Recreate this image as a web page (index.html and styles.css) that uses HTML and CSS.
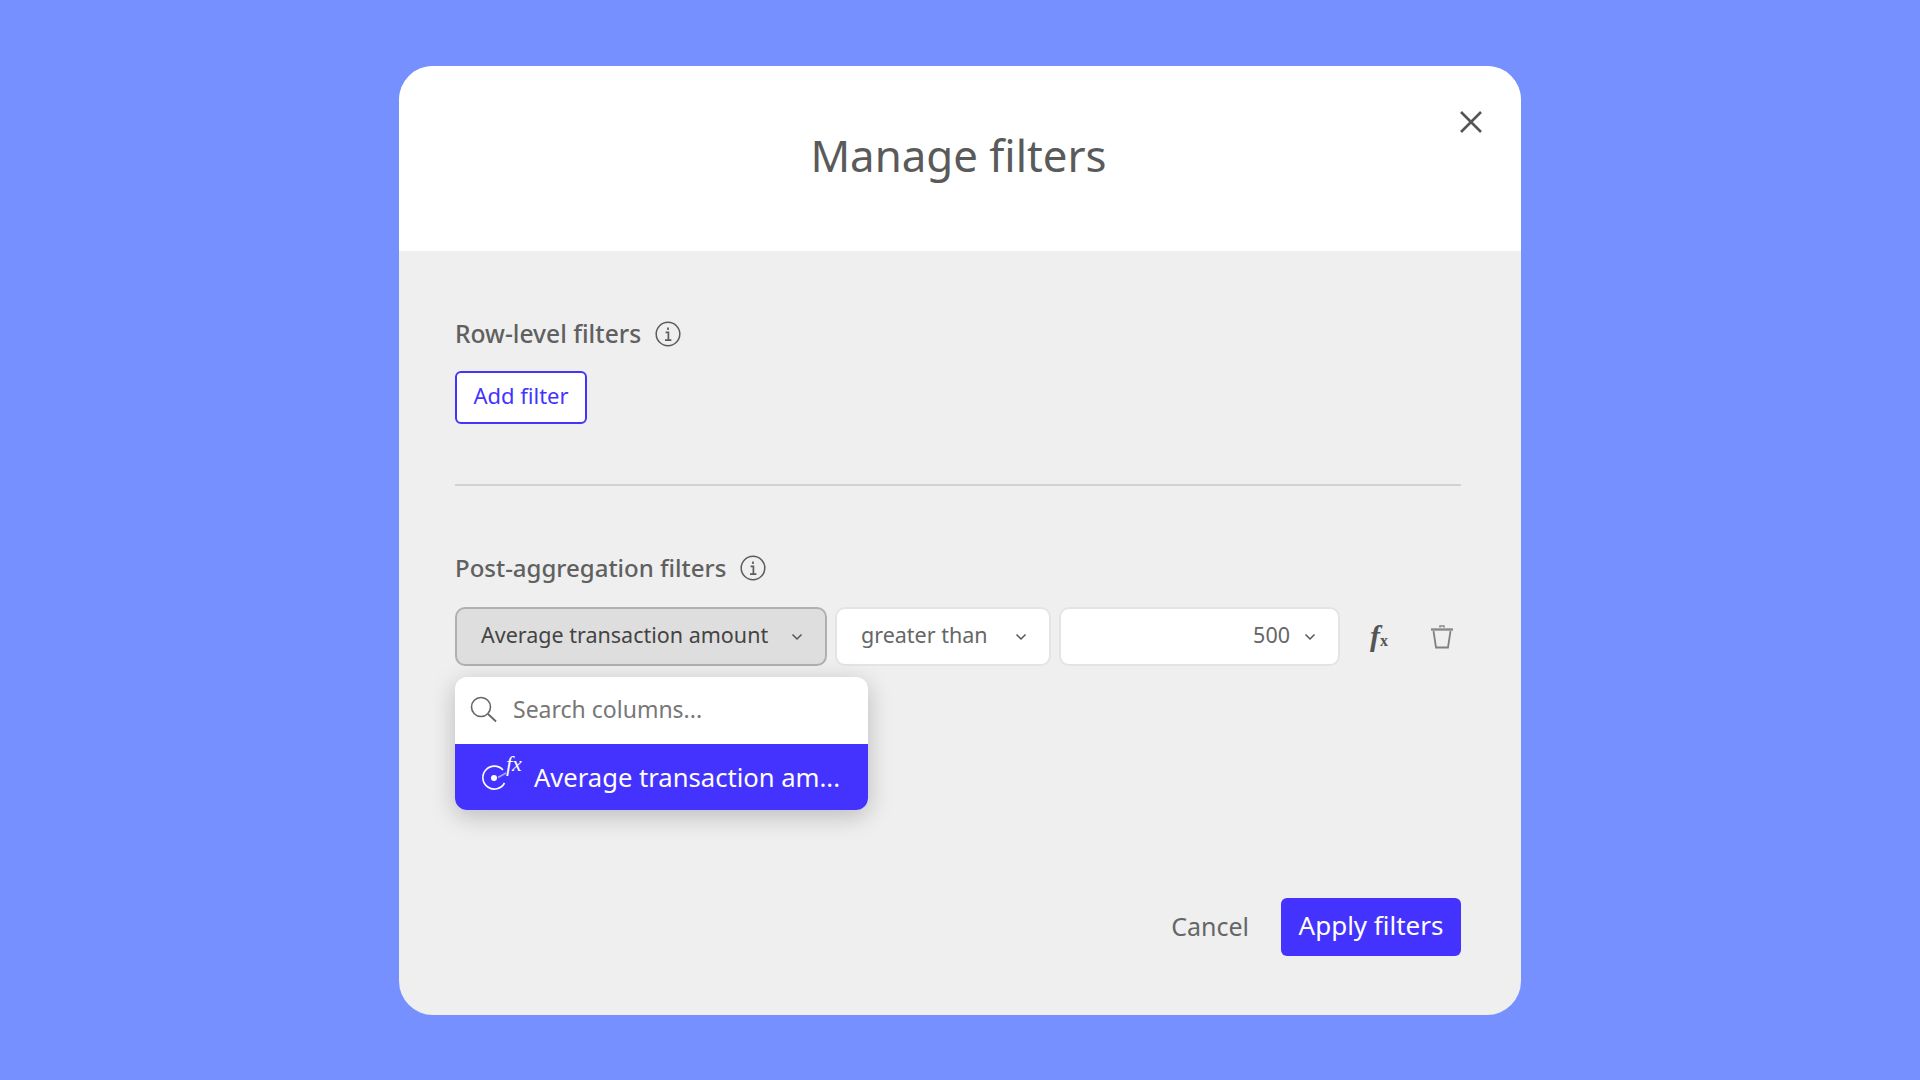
FILE: index.html
```html
<!DOCTYPE html>
<html lang="en">
<head>
    <meta charset="UTF-8">
    <title>Manage filters</title>
    <link rel="stylesheet" href="styles.css">
</head>
<body>
    <div class="modal">
        <!-- Header -->
        <div class="modal-header">
            <h1>Manage filters</h1>
            <svg class="close-icon" width="24" height="24" viewBox="0 0 24 24"><path d="M2 2 L22 22 M22 2 L2 22" fill="none" stroke="#555" stroke-width="2.6"/></svg>
        </div>

        <div class="modal-body">
            <!-- Row-level section -->
            <div class="section-title section-title-row">
                <span>Row-level filters</span>
                <svg class="info-icon" width="26" height="26" viewBox="0 0 26 26"><circle cx="13" cy="13" r="11.8" fill="none" stroke="#5c5c5c" stroke-width="1.5"/><path d="M13 6.6v2.4M10.6 11.4H13.4V19M10 19.2H16.4" fill="none" stroke="#5c5c5c" stroke-width="1.7"/></svg>
            </div>
            <button class="add-filter">Add filter</button>

            <div class="divider"></div>

            <!-- Post-aggregation section -->
            <div class="section-title">
                <span>Post-aggregation filters</span>
                <svg class="info-icon" width="26" height="26" viewBox="0 0 26 26"><circle cx="13" cy="13" r="11.8" fill="none" stroke="#5c5c5c" stroke-width="1.5"/><path d="M13 6.6v2.4M10.6 11.4H13.4V19M10 19.2H16.4" fill="none" stroke="#5c5c5c" stroke-width="1.7"/></svg>
            </div>
            <div class="filter-row">
                <div class="select select-column">
                    <span>Average transaction amount</span>
                    <svg class="chevron" width="12" height="8" viewBox="0 0 12 8"><path d="M1.5 1.5 L6 6 L10.5 1.5" fill="none" stroke="#555" stroke-width="1.5"/></svg>
                </div>
                <div class="select select-op">
                    <span>greater than</span>
                    <svg class="chevron" width="12" height="8" viewBox="0 0 12 8"><path d="M1.5 1.5 L6 6 L10.5 1.5" fill="none" stroke="#555" stroke-width="1.5"/></svg>
                </div>
                <div class="select select-value">
                    <span>500</span>
                    <svg class="chevron" width="12" height="8" viewBox="0 0 12 8"><path d="M1.5 1.5 L6 6 L10.5 1.5" fill="none" stroke="#555" stroke-width="1.5"/></svg>
                </div>
                <div class="fx-btn"><i class="fx-f">f</i><b class="fx-x">x</b></div>
                <svg class="trash-icon" width="24" height="26" viewBox="0 0 24 26"><path d="M1 5.5H23" stroke="#8a8a8a" stroke-width="2.4" fill="none"/><path d="M10 3.5V2H14V3.5" stroke="#8a8a8a" stroke-width="1.6" fill="none"/><path d="M3.5 7 L6 23.5 H18 L20.5 7" stroke="#808080" stroke-width="1.8" fill="none"/></svg>

                <!-- Column picker dropdown -->
                <div class="dropdown">
                    <div class="dropdown-search">
                        <svg class="search-icon" width="28" height="28" viewBox="0 0 28 28"><circle cx="12" cy="12" r="9.5" fill="none" stroke="#666" stroke-width="1.6"/><path d="M19 19 L27 26.5" stroke="#666" stroke-width="1.8"/></svg>
                        <span>Search columns...</span>
                    </div>
                    <div class="dropdown-item">
                        <svg class="calc-icon" width="44" height="36" viewBox="0 0 44 36"><path d="M23 11 A11.5 11.5 0 1 0 24.5 24" fill="none" stroke="#fff" stroke-width="1.6"/><circle cx="14" cy="19" r="3" fill="#fff"/><path d="M18 18.5 L26 14" stroke="#a9a2ff" stroke-width="1.6"/></svg>
                        <i class="calc-fx">fx</i>
                        <span class="item-label">Average transaction am...</span>
                    </div>
                </div>
            </div>

            <!-- Footer -->
            <div class="modal-footer">
                <span class="cancel">Cancel</span>
                <button class="apply">Apply filters</button>
            </div>
        </div>
    </div>
</body>
</html>
```

FILE: styles.css
```css
/* General Reset */
html, body {
    margin: 0;
    padding: 0;
    width: 100%;
    height: 100%;
    font-family: "Noto Sans", "Open Sans", sans-serif;
    background: #7691ff;
    overflow: hidden;
}

body {
    display: flex;
    justify-content: center;
    padding-top: 66px;
    box-sizing: border-box;
}

/* Modal */
.modal {
    width: 1122px;
    height: 949px;
    border-radius: 34px;
    overflow: hidden;
    background: #efefef;
    display: flex;
    flex-direction: column;
}

.modal-header {
    position: relative;
    height: 185px;
    flex-shrink: 0;
    background: #ffffff;
    display: flex;
    justify-content: center;
}

.modal-header h1 {
    margin: 0 3px 0 0;
    padding-top: 61px;
    font-size: 43.8px;
    line-height: 56px;
    font-weight: 400;
    color: #5a5a5a;
}

.close-icon {
    position: absolute;
    top: 44px;
    right: 38px;
}

.modal-body {
    flex: 1;
    padding: 67px 60px 0 56px;
    display: flex;
    flex-direction: column;
}

/* Section titles */
.section-title {
    display: flex;
    align-items: center;
    gap: 14px;
    height: 32px;
    font-size: 24px;
    font-weight: 500;
    color: #606060;
}

.section-title span {
    padding-bottom: 1px;
}

.section-title-row {
    font-size: 24.6px;
}

.add-filter {
    width: 132px;
    height: 53px;
    margin-top: 21px;
    padding: 0 0 5px;
    font-family: inherit;
    font-size: 22px;
    color: #4433ff;
    background: #ffffff;
    border: 2px solid #4433ff;
    border-radius: 6px;
}

.divider {
    height: 2px;
    margin: 60px 0 66px;
    background: #d2d2d2;
}

/* Filter row */
.filter-row {
    position: relative;
    display: flex;
    align-items: center;
    gap: 8px;
    margin-top: 23px;
}

.select {
    box-sizing: border-box;
    height: 59px;
    display: flex;
    align-items: center;
    justify-content: space-between;
    padding: 0 22px 0 24px;
    font-size: 21.5px;
    color: #666666;
    background: #ffffff;
    border: 2px solid #e4e4e4;
    border-radius: 10px;
}

.select span {
    padding-bottom: 4px;
}

.select-column {
    width: 372px;
    color: #444444;
    background: #dedede;
    border-color: #b0b0b0;
}

.select-op {
    width: 216px;
}

.select-value {
    width: 281px;
    justify-content: flex-end;
    gap: 14px;
}

.fx-btn {
    width: 24px;
    margin-left: 22px;
    padding-bottom: 2px;
    display: flex;
    align-items: flex-end;
    font-family: "Liberation Serif", serif;
    color: #555555;
}

.fx-f {
    font-size: 30px;
    line-height: 30px;
    font-weight: 700;
}

.fx-x {
    font-size: 16px;
    line-height: 20px;
}

.trash-icon {
    margin-left: 28px;
}

/* Dropdown */
.dropdown {
    position: absolute;
    top: 70px;
    left: 0;
    width: 413px;
    height: 133px;
    border-radius: 12px;
    overflow: hidden;
    background: #ffffff;
    box-shadow: 0 6px 24px rgba(0, 0, 0, 0.22);
}

.dropdown-search {
    height: 67px;
    display: flex;
    align-items: center;
    gap: 16px;
    padding-left: 14px;
    box-sizing: border-box;
    font-size: 23px;
    color: #777777;
}

.dropdown-search span {
    padding-bottom: 3px;
}

.search-icon {
    margin-bottom: 4px;
}

.dropdown-item {
    position: relative;
    height: 66px;
    display: flex;
    align-items: center;
    padding-left: 25px;
    font-size: 25.6px;
    color: #ffffff;
    background: #4433ff;
}

.calc-fx {
    position: absolute;
    left: 51px;
    top: 8px;
    font-family: "Liberation Serif", serif;
    font-size: 22px;
    line-height: 24px;
    color: #ffffff;
}

.item-label {
    margin-left: 10px;
    white-space: nowrap;
}

/* Footer */
.modal-footer {
    margin-top: 232px;
    display: flex;
    align-items: center;
    justify-content: flex-end;
    gap: 32px;
}

.cancel {
    padding-bottom: 2px;
    font-size: 25px;
    color: #666666;
}

.apply {
    width: 180px;
    height: 58px;
    padding: 0 0 4px;
    font-family: inherit;
    font-size: 26px;
    color: #ffffff;
    background: #4433ff;
    border: none;
    border-radius: 6px;
}
```
